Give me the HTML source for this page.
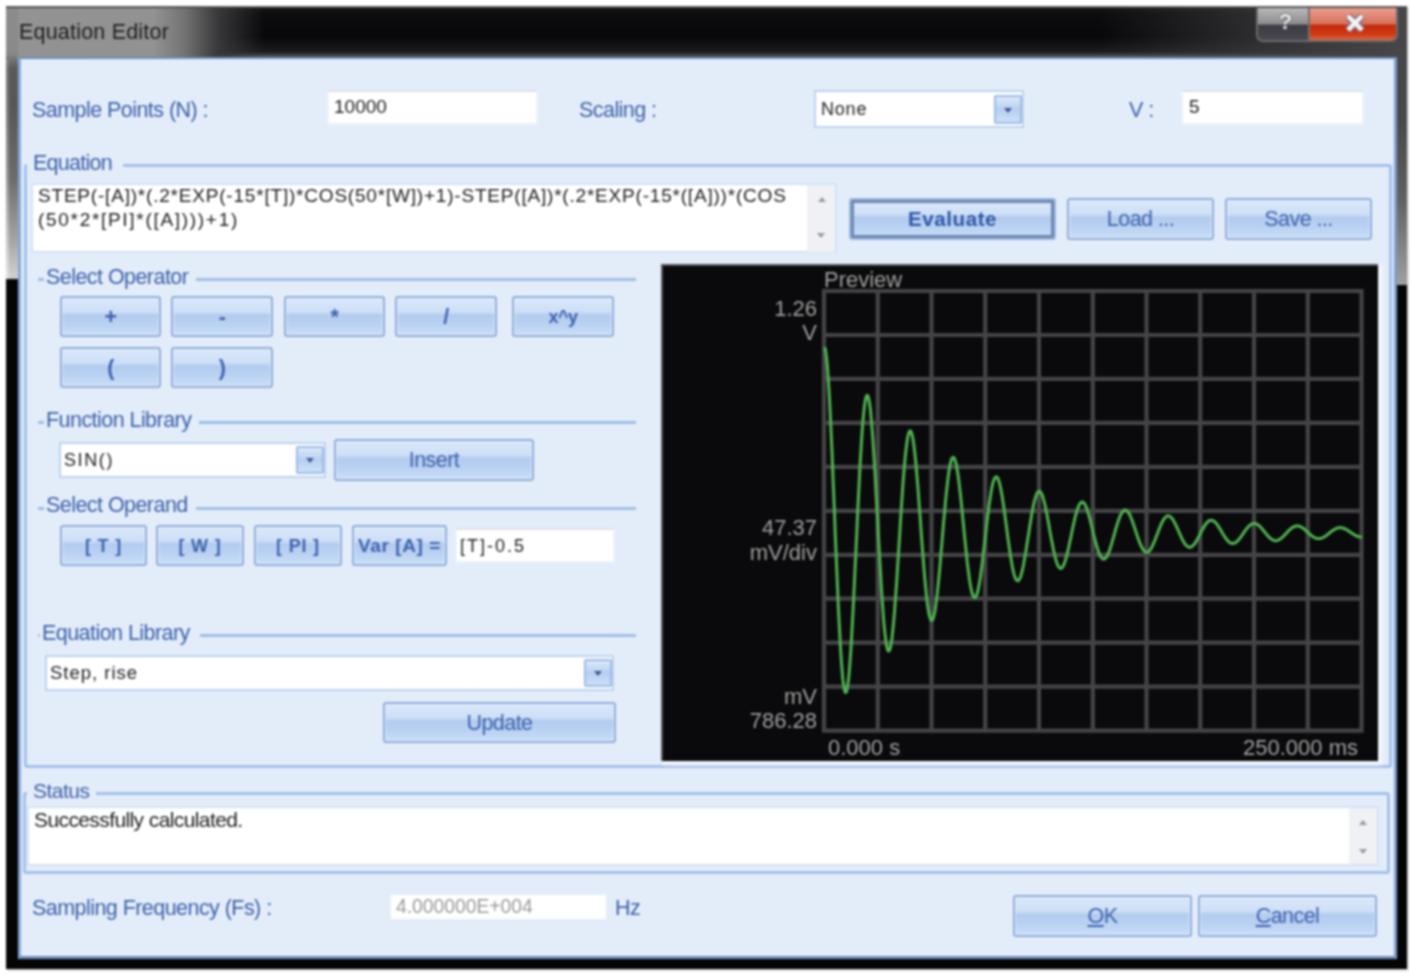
<!DOCTYPE html>
<html><head><meta charset="utf-8"><title>Equation Editor</title>
<style>
html,body{margin:0;padding:0}
body{width:1411px;height:976px;background:#fff;position:relative;overflow:hidden;font-family:"Liberation Sans",sans-serif;font-size:20px;color:#3c5fa8}
.a{position:absolute}
.t{position:absolute;white-space:pre;line-height:24px;height:24px}
.btn{position:absolute;box-sizing:border-box;border:2px solid #90acd9;border-radius:3px;background:linear-gradient(#dbe8fa 0%,#cddff7 38%,#b3cbee 46%,#b9d1f2 70%,#c9def7 100%);color:#3d62ae;text-align:center;font-size:21.5px;letter-spacing:-.55px;box-shadow:inset 0 0 0 1px rgba(235,243,253,.7)}
.btn span{position:absolute;left:0;right:0;top:50%;margin-top:-12px;line-height:24px;white-space:pre}
.inp{position:absolute;box-sizing:border-box;background:#fff;border:2px solid #edf2fa;border-top-color:#dde1e8;color:#1c1c1c}
.dd{position:absolute;box-sizing:border-box;border:2px solid #9fbbe4;border-radius:2px;background:linear-gradient(#dce9fa,#b7cff0 50%,#cce0f8)}
.dd:after{content:"";position:absolute;left:50%;top:50%;margin-left:-4px;margin-top:-2px;border:4px solid transparent;border-top:5px solid #3a5a98;border-bottom:0}
.gl{position:absolute;height:3px;background:#a0bde7;margin-top:-1px}
.lab{position:absolute;white-space:pre;line-height:24px;height:24px;background:#e3edfa;padding:0 6px}
</style></head>
<body>
<div id="root" style="position:absolute;left:0;top:0;width:1411px;height:976px;background:#fff;filter:blur(1px)">
<!-- window frame -->
<div class="a" style="left:6px;top:6px;width:1401px;height:963px;background:#050506;box-shadow:1px 1px 2px rgba(0,0,0,.3)"></div>
<div class="a" id="titlebar" style="left:6px;top:6px;width:1401px;height:52px;background:linear-gradient(#1a1a1c 0,#0c0c0e 8px,#08080a 60%,#1c1c1e 46px,#4c4c4e 50px,#555 52px)"></div>
<div class="a" id="glow" style="left:6px;top:7px;width:420px;height:51px;background:linear-gradient(90deg,#939393 0,#929292 148px,#747474 178px,#38383a 212px,rgba(12,12,14,0) 258px)"></div>
<div class="a" style="left:6px;top:6px;width:1401px;height:2px;background:linear-gradient(#8a8a8a,#2a2a2a)"></div>
<div class="a" id="lframe" style="left:6px;top:8px;width:12px;height:271px;background:linear-gradient(#8c8c8c 0,#8a8a8a 45px,#5a5a5a 60px,#585858 100px,#6c6c6c 170px,#a8a8a8 235px,#d0d0d0 268px,#c8c8c8 271px)"></div>
<div class="a" style="left:6px;top:60px;width:3px;height:219px;background:linear-gradient(rgba(255,255,255,.15),rgba(255,255,255,.4))"></div>
<div class="a" id="rframe" style="left:1396px;top:8px;width:11px;height:277px;background:linear-gradient(#464648 0,#484848 110px,#606060 190px,#8c8c8c 250px,#a0a0a0 277px)"></div>
<div class="a" id="rglow" style="left:1100px;top:8px;width:296px;height:50px;background:linear-gradient(90deg,rgba(70,70,72,0),rgba(70,70,72,.55) 50%,#464648)"></div>
<div class="t" id="title" style="left:19px;top:20px;font-size:21.5px;color:#1c1c1c;letter-spacing:.2px">Equation Editor</div>
<!-- caption buttons -->
<div class="a" id="capbtn" style="left:1256px;top:8px;width:142px;height:34px;border-radius:0 0 7px 7px;border:2px solid #6c6c6e;border-top:0;box-sizing:border-box;overflow:hidden;background:#444">
  <div class="a" style="left:0;top:0;width:51px;height:35px;background:linear-gradient(#b9b9bb 0,#8d8d90 45%,#3c3d42 50%,#4a4b50 100%)"></div>
  <div class="a" style="left:51px;top:0;width:91px;height:35px;background:linear-gradient(#e9a090 0,#d8705c 45%,#c32a0c 50%,#cf3a14 75%,#e08060 100%)"></div>
  <div class="a" style="left:50px;top:0;width:2px;height:35px;background:#7a6c6c"></div>
  <div class="t" style="left:2px;width:51px;top:2px;text-align:center;font-weight:bold;font-size:22px;color:#e9e9ee;text-shadow:0 0 2px #333">?</div>
  <svg class="a" style="left:85px;top:4.5px" width="24" height="20" viewBox="0 0 24 20"><path d="M5 3 L19 17 M19 3 L5 17" stroke="#80717a" stroke-width="7.5" /><path d="M5 3 L19 17 M19 3 L5 17" stroke="#f4f4f8" stroke-width="4.5"/></svg>
</div>
<!-- client -->
<div class="a" id="client" style="left:18px;top:57px;width:1379px;height:902px;box-sizing:border-box;border:2px solid #6b8dba;border-left:3px solid #86a7d9;border-right:3px solid #7d9dcc;border-bottom:3px solid #6f8fbc;background:#e3edfa"></div>

<!-- row 1 -->
<div class="t" style="left:32px;top:98px;font-size:21.5px;letter-spacing:-.55px">Sample Points (N) :</div>
<div class="inp" style="left:327px;top:90px;width:211px;height:35px"><div class="t" style="left:5px;top:3px;font-size:19px">10000</div></div>
<div class="t" style="left:579px;top:98px;font-size:21.5px;letter-spacing:-.55px">Scaling :</div>
<div class="inp" style="left:814px;top:90px;width:210px;height:38px;border-color:#bcd2ef"><div class="t" style="left:5px;top:5px;font-size:18px;letter-spacing:.8px">None</div></div>
<div class="dd" style="left:994px;top:95px;width:28px;height:29px"></div>
<div class="t" style="left:1129px;top:98px;font-size:21.5px;letter-spacing:-.55px">V :</div>
<div class="inp" style="left:1181px;top:90px;width:183px;height:35px"><div class="t" style="left:6px;top:3px;font-size:19px">5</div></div>

<!-- Equation group -->
<div class="a" style="left:24px;top:164px;width:1368px;height:604px;box-sizing:border-box;border:3px solid #a3c0e9;border-radius:3px"></div>
<div class="lab" style="left:27px;top:151px;padding:0 11px 0 6px;font-size:21.5px;letter-spacing:-.75px">Equation</div>
<div class="inp" style="left:31px;top:183px;width:806px;height:70px;border-color:#d3e2f6">
  <div class="t" style="left:5px;top:-1px;font-size:19px;line-height:24px;height:48px;letter-spacing:.8px">STEP(-[A])*(.2*EXP(-15*[T])*COS(50*[W])+1)-STEP([A])*(.2*EXP(-15*([A]))*(COS
<span style="letter-spacing:1.7px">(50*2*[PI]*([A])))+1)</span></div>
  <div class="a" style="right:0;top:0;width:28px;height:67px;background:#f0f1f4"></div>
  <div class="a" style="right:9px;top:12px;border:4px solid transparent;border-bottom:5px solid #999;border-top:0"></div>
  <div class="a" style="right:10px;top:48px;border:4px solid transparent;border-top:5px solid #999;border-bottom:0"></div>
</div>
<div class="btn" style="left:849px;top:198px;width:207px;height:42px;border-color:#9bb6de;box-shadow:inset 0 0 0 3px #6f88b2;font-weight:bold;color:#2d56a6;font-size:20.5px;letter-spacing:.6px"><span>Evaluate</span></div>
<div class="btn" style="left:1067px;top:198px;width:147px;height:42px"><span>Load ...</span></div>
<div class="btn" style="left:1225px;top:198px;width:147px;height:42px"><span>Save ...</span></div>

<!-- Select Operator -->
<div class="gl" style="left:38px;top:279px;width:598px"></div>
<div class="lab" style="left:44px;top:265px;padding:0 8px 0 2px;font-size:21.5px;letter-spacing:-.55px">Select Operator</div>
<div class="btn" style="left:60px;top:296px;width:101px;height:41px"><span style="font-weight:bold">+</span></div>
<div class="btn" style="left:171px;top:296px;width:102px;height:41px"><span style="font-weight:bold">-</span></div>
<div class="btn" style="left:284px;top:296px;width:101px;height:41px"><span style="font-weight:bold">*</span></div>
<div class="btn" style="left:395px;top:296px;width:102px;height:41px"><span style="font-weight:bold">/</span></div>
<div class="btn" style="left:512px;top:296px;width:102px;height:41px;font-size:18px"><span style="font-weight:bold">x^y</span></div>
<div class="btn" style="left:60px;top:347px;width:101px;height:41px"><span style="font-weight:bold">(</span></div>
<div class="btn" style="left:171px;top:347px;width:102px;height:41px"><span style="font-weight:bold">)</span></div>

<!-- Function Library -->
<div class="gl" style="left:38px;top:422px;width:598px"></div>
<div class="lab" style="left:44px;top:408px;padding:0 8px 0 2px;font-size:21.5px;letter-spacing:-.55px">Function Library</div>
<div class="inp" style="left:59px;top:442px;width:267px;height:36px;border-color:#bcd2ef"><div class="t" style="left:3px;top:4px;font-size:18px;letter-spacing:1.6px">SIN()</div></div>
<div class="dd" style="left:296px;top:446px;width:28px;height:28px"></div>
<div class="btn" style="left:334px;top:439px;width:200px;height:42px"><span>Insert</span></div>

<!-- Select Operand -->
<div class="gl" style="left:38px;top:508px;width:598px"></div>
<div class="lab" style="left:44px;top:493px;padding:0 8px 0 2px;font-size:21.5px;letter-spacing:-.55px">Select Operand</div>
<div class="btn" style="left:60px;top:525px;width:87px;height:41px;font-size:18px"><span style="font-weight:bold;letter-spacing:.8px">[ T ]</span></div>
<div class="btn" style="left:156px;top:525px;width:88px;height:41px;font-size:18px"><span style="font-weight:bold;letter-spacing:.8px">[ W ]</span></div>
<div class="btn" style="left:254px;top:525px;width:88px;height:41px;font-size:18px"><span style="font-weight:bold;letter-spacing:.8px">[ PI ]</span></div>
<div class="btn" style="left:352px;top:525px;width:95px;height:41px;font-size:18px"><span style="font-weight:bold;letter-spacing:.6px;font-size:19px">Var [A] =</span></div>
<div class="inp" style="left:455px;top:528px;width:160px;height:35px"><div class="t" style="left:3px;top:4px;font-size:18px;letter-spacing:2px">[T]-0.5</div></div>

<!-- Equation Library -->
<div class="gl" style="left:38px;top:635px;width:598px"></div>
<div class="lab" style="left:40px;top:621px;padding:0 10px 0 2px;font-size:21.5px;letter-spacing:-.55px">Equation Library</div>
<div class="inp" style="left:45px;top:655px;width:569px;height:36px;border-color:#bcd2ef"><div class="t" style="left:3px;top:4px;font-size:18.5px;letter-spacing:1px">Step, rise</div></div>
<div class="dd" style="left:584px;top:659px;width:28px;height:28px"></div>
<div class="btn" style="left:383px;top:702px;width:233px;height:41px"><span>Update</span></div>

<!-- Preview -->
<div class="a" id="preview" style="left:661px;top:264px;width:717px;height:497px;background:#0a0a0c;border-top:2px solid #555;border-left:2px solid #555;box-sizing:border-box;box-shadow:3px 3px 3px 1px #f3f7fd">
<svg class="a" style="left:-2px;top:-2px" width="717" height="496" viewBox="661 264 717 496" font-family="Liberation Sans, sans-serif" font-size="22" fill="#a0a0a0">
<path id="grid" stroke="#444447" stroke-width="4.2" fill="none" d="M824.0 289.0V732.6M822.0 291.0H1363.5M877.8 289.0V732.6M822.0 335.0H1363.5M931.5 289.0V732.6M822.0 378.9H1363.5M985.2 289.0V732.6M822.0 422.9H1363.5M1039.0 289.0V732.6M822.0 466.8H1363.5M1092.8 289.0V732.6M822.0 510.8H1363.5M1146.5 289.0V732.6M822.0 554.8H1363.5M1200.2 289.0V732.6M822.0 598.7H1363.5M1254.0 289.0V732.6M822.0 642.7H1363.5M1307.8 289.0V732.6M822.0 686.6H1363.5M1361.5 289.0V732.6M822.0 730.6H1363.5"/>
<path id="wave" fill="none" stroke="#50b450" stroke-width="3" stroke-linejoin="round" d="M824.5 347.2L825.3 349.3L826.0 353.7L826.8 360.4L827.6 369.1L828.3 379.8L829.1 392.2L829.9 406.3L830.6 421.9L831.4 438.7L832.2 456.4L832.9 474.9L833.7 494.0L834.5 513.4L835.2 532.7L836.0 551.9L836.8 570.6L837.6 588.7L838.3 605.8L839.1 621.9L839.9 636.7L840.6 650.0L841.4 661.7L842.2 671.6L842.9 679.7L843.7 685.9L844.5 690.1L845.2 692.3L846.0 692.4L846.8 690.6L847.5 686.8L848.3 681.1L849.1 673.6L849.8 664.4L850.6 653.6L851.4 641.5L852.1 628.1L852.9 613.7L853.7 598.4L854.4 582.5L855.2 566.1L856.0 549.4L856.8 532.7L857.5 516.2L858.3 500.1L859.1 484.6L859.8 469.8L860.6 456.0L861.4 443.3L862.1 431.8L862.9 421.7L863.7 413.2L864.4 406.2L865.2 400.9L866.0 397.3L866.7 395.4L867.5 395.3L868.3 396.9L869.0 400.1L869.8 405.0L870.6 411.5L871.3 419.4L872.1 428.7L872.9 439.1L873.6 450.6L874.4 463.0L875.2 476.2L875.9 489.9L876.7 504.0L877.5 518.4L878.2 532.7L879.0 546.9L879.8 560.8L880.6 574.2L881.3 586.9L882.1 598.8L882.9 609.7L883.6 619.6L884.4 628.3L885.2 635.6L885.9 641.6L886.7 646.2L887.5 649.3L888.2 650.9L889.0 651.0L889.8 649.7L890.5 646.9L891.3 642.6L892.1 637.1L892.8 630.3L893.6 622.3L894.4 613.3L895.1 603.4L895.9 592.7L896.7 581.4L897.4 569.6L898.2 557.4L899.0 545.1L899.8 532.7L900.5 520.5L901.3 508.6L902.1 497.1L902.8 486.1L903.6 475.9L904.4 466.5L905.1 458.0L905.9 450.5L906.7 444.2L907.4 439.0L908.2 435.0L909.0 432.4L909.7 431.0L910.5 430.9L911.3 432.1L912.0 434.5L912.8 438.1L913.6 442.9L914.3 448.8L915.1 455.6L915.9 463.4L916.6 471.9L917.4 481.1L918.2 490.8L918.9 501.0L919.7 511.5L920.5 522.1L921.2 532.7L922.0 543.3L922.8 553.5L923.6 563.4L924.3 572.9L925.1 581.7L925.9 589.8L926.6 597.1L927.4 603.5L928.2 609.0L928.9 613.4L929.7 616.8L930.5 619.1L931.2 620.3L932.0 620.4L932.8 619.4L933.5 617.3L934.3 614.1L935.1 610.0L935.8 605.0L936.6 599.1L937.4 592.4L938.1 585.1L938.9 577.2L939.7 568.8L940.4 560.0L941.2 551.0L942.0 541.9L942.8 532.7L943.5 523.7L944.3 514.8L945.1 506.3L945.8 498.2L946.6 490.6L947.4 483.6L948.1 477.3L948.9 471.8L949.7 467.1L950.4 463.3L951.2 460.4L952.0 458.4L952.7 457.4L953.5 457.3L954.3 458.2L955.0 460.0L955.8 462.7L956.6 466.2L957.3 470.5L958.1 475.6L958.9 481.3L959.6 487.7L960.4 494.5L961.2 501.7L961.9 509.2L962.7 517.0L963.5 524.8L964.2 532.7L965.0 540.5L965.8 548.1L966.6 555.5L967.3 562.5L968.1 569.0L968.9 575.0L969.6 580.4L970.4 585.2L971.2 589.2L971.9 592.5L972.7 595.0L973.5 596.7L974.2 597.6L975.0 597.7L975.8 596.9L976.5 595.4L977.3 593.0L978.1 590.0L978.8 586.3L979.6 581.9L980.4 577.0L981.1 571.5L981.9 565.6L982.7 559.4L983.4 552.9L984.2 546.3L985.0 539.5L985.8 532.7L986.5 526.0L987.3 519.5L988.1 513.1L988.8 507.1L989.6 501.5L990.4 496.4L991.1 491.7L991.9 487.6L992.7 484.1L993.4 481.3L994.2 479.1L995.0 477.7L995.7 476.9L996.5 476.8L997.3 477.5L998.0 478.8L998.8 480.8L999.6 483.4L1000.3 486.7L1001.1 490.4L1001.9 494.7L1002.6 499.3L1003.4 504.4L1004.2 509.7L1004.9 515.3L1005.7 521.1L1006.5 526.9L1007.2 532.7L1008.0 538.5L1008.8 544.1L1009.6 549.6L1010.3 554.7L1011.1 559.6L1011.9 564.0L1012.6 568.0L1013.4 571.6L1014.2 574.6L1014.9 577.0L1015.7 578.9L1016.5 580.1L1017.2 580.8L1018.0 580.8L1018.8 580.3L1019.5 579.1L1020.3 577.4L1021.1 575.2L1021.8 572.4L1022.6 569.1L1023.4 565.5L1024.1 561.5L1024.9 557.1L1025.7 552.5L1026.4 547.7L1027.2 542.8L1028.0 537.8L1028.8 532.7L1029.5 527.8L1030.3 522.9L1031.1 518.2L1031.8 513.8L1032.6 509.6L1033.4 505.8L1034.1 502.3L1034.9 499.3L1035.7 496.7L1036.4 494.6L1037.2 493.0L1038.0 491.9L1038.7 491.4L1039.5 491.3L1040.3 491.8L1041.0 492.8L1041.8 494.3L1042.6 496.2L1043.3 498.6L1044.1 501.4L1044.9 504.5L1045.6 508.0L1046.4 511.7L1047.2 515.7L1047.9 519.8L1048.7 524.1L1049.5 528.4L1050.2 532.7L1051.0 537.0L1051.8 541.2L1052.6 545.2L1053.3 549.0L1054.1 552.6L1054.9 555.9L1055.6 558.9L1056.4 561.5L1057.2 563.7L1057.9 565.5L1058.7 566.9L1059.5 567.8L1060.2 568.3L1061.0 568.4L1061.8 568.0L1062.5 567.1L1063.3 565.8L1064.1 564.2L1064.8 562.1L1065.6 559.7L1066.4 557.0L1067.1 554.0L1067.9 550.8L1068.7 547.4L1069.4 543.8L1070.2 540.2L1071.0 536.5L1071.8 532.7L1072.5 529.0L1073.3 525.5L1074.1 522.0L1074.8 518.7L1075.6 515.6L1076.4 512.8L1077.1 510.2L1077.9 508.0L1078.7 506.1L1079.4 504.5L1080.2 503.3L1081.0 502.5L1081.7 502.1L1082.5 502.1L1083.3 502.4L1084.0 503.1L1084.8 504.2L1085.6 505.7L1086.3 507.4L1087.1 509.5L1087.9 511.8L1088.6 514.4L1089.4 517.2L1090.2 520.1L1090.9 523.2L1091.7 526.3L1092.5 529.5L1093.2 532.7L1094.0 535.9L1094.8 539.0L1095.6 542.0L1096.3 544.8L1097.1 547.5L1097.9 549.9L1098.6 552.1L1099.4 554.0L1100.2 555.7L1100.9 557.0L1101.7 558.1L1102.5 558.7L1103.2 559.1L1104.0 559.1L1104.8 558.8L1105.5 558.2L1106.3 557.3L1107.1 556.0L1107.8 554.5L1108.6 552.7L1109.4 550.7L1110.1 548.5L1110.9 546.1L1111.7 543.6L1112.4 540.9L1113.2 538.2L1114.0 535.5L1114.8 532.7L1115.5 530.0L1116.3 527.3L1117.1 524.8L1117.8 522.3L1118.6 520.0L1119.4 517.9L1120.1 516.0L1120.9 514.4L1121.7 513.0L1122.4 511.8L1123.2 510.9L1124.0 510.3L1124.7 510.0L1125.5 510.0L1126.3 510.3L1127.0 510.8L1127.8 511.6L1128.6 512.7L1129.3 514.0L1130.1 515.5L1130.9 517.3L1131.6 519.2L1132.4 521.2L1133.2 523.4L1133.9 525.7L1134.7 528.0L1135.5 530.4L1136.2 532.7L1137.0 535.1L1137.8 537.4L1138.6 539.6L1139.3 541.7L1140.1 543.6L1140.9 545.5L1141.6 547.1L1142.4 548.5L1143.2 549.7L1143.9 550.7L1144.7 551.5L1145.5 552.0L1146.2 552.3L1147.0 552.3L1147.8 552.1L1148.5 551.6L1149.3 550.9L1150.1 550.0L1150.8 548.9L1151.6 547.5L1152.4 546.0L1153.1 544.4L1153.9 542.6L1154.7 540.8L1155.4 538.8L1156.2 536.8L1157.0 534.8L1157.8 532.7L1158.5 530.7L1159.3 528.7L1160.1 526.8L1160.8 525.0L1161.6 523.3L1162.4 521.8L1163.1 520.4L1163.9 519.1L1164.7 518.1L1165.4 517.2L1166.2 516.6L1167.0 516.1L1167.7 515.9L1168.5 515.9L1169.3 516.1L1170.0 516.5L1170.8 517.1L1171.6 517.9L1172.3 518.9L1173.1 520.0L1173.9 521.3L1174.6 522.7L1175.4 524.2L1176.2 525.8L1176.9 527.5L1177.7 529.2L1178.5 531.0L1179.2 532.7L1180.0 534.5L1180.8 536.2L1181.6 537.8L1182.3 539.4L1183.1 540.8L1183.9 542.2L1184.6 543.4L1185.4 544.4L1186.2 545.3L1186.9 546.1L1187.7 546.6L1188.5 547.0L1189.2 547.2L1190.0 547.2L1190.8 547.0L1191.5 546.7L1192.3 546.2L1193.1 545.5L1193.8 544.7L1194.6 543.7L1195.4 542.6L1196.1 541.4L1196.9 540.1L1197.7 538.7L1198.4 537.2L1199.2 535.8L1200.0 534.2L1200.8 532.7L1201.5 531.2L1202.3 529.8L1203.1 528.4L1203.8 527.0L1204.6 525.8L1205.4 524.6L1206.1 523.6L1206.9 522.7L1207.7 521.9L1208.4 521.2L1209.2 520.8L1210.0 520.4L1210.7 520.3L1211.5 520.3L1212.3 520.4L1213.0 520.7L1213.8 521.1L1214.6 521.7L1215.3 522.4L1216.1 523.3L1216.9 524.2L1217.6 525.3L1218.4 526.4L1219.2 527.6L1219.9 528.8L1220.7 530.1L1221.5 531.4L1222.2 532.7L1223.0 534.0L1223.8 535.3L1224.6 536.5L1225.3 537.6L1226.1 538.7L1226.9 539.7L1227.6 540.6L1228.4 541.4L1229.2 542.1L1229.9 542.6L1230.7 543.0L1231.5 543.3L1232.2 543.5L1233.0 543.5L1233.8 543.3L1234.5 543.1L1235.3 542.7L1236.1 542.2L1236.8 541.6L1237.6 540.9L1238.4 540.0L1239.1 539.1L1239.9 538.2L1240.7 537.1L1241.4 536.1L1242.2 535.0L1243.0 533.8L1243.8 532.7L1244.5 531.6L1245.3 530.5L1246.1 529.5L1246.8 528.5L1247.6 527.6L1248.4 526.7L1249.1 525.9L1249.9 525.3L1250.7 524.7L1251.4 524.2L1252.2 523.9L1253.0 523.6L1253.7 523.5L1254.5 523.5L1255.3 523.6L1256.0 523.8L1256.8 524.1L1257.6 524.6L1258.3 525.1L1259.1 525.7L1259.9 526.4L1260.6 527.2L1261.4 528.0L1262.2 528.9L1262.9 529.9L1263.7 530.8L1264.5 531.8L1265.2 532.7L1266.0 533.7L1266.8 534.6L1267.6 535.5L1268.3 536.4L1269.1 537.2L1269.9 537.9L1270.6 538.6L1271.4 539.1L1272.2 539.6L1272.9 540.0L1273.7 540.4L1274.5 540.6L1275.2 540.7L1276.0 540.7L1276.8 540.6L1277.5 540.4L1278.3 540.1L1279.1 539.7L1279.8 539.3L1280.6 538.7L1281.4 538.1L1282.1 537.5L1282.9 536.8L1283.7 536.0L1284.4 535.2L1285.2 534.4L1286.0 533.6L1286.8 532.7L1287.5 531.9L1288.3 531.1L1289.1 530.3L1289.8 529.6L1290.6 528.9L1291.4 528.3L1292.1 527.7L1292.9 527.2L1293.7 526.8L1294.4 526.4L1295.2 526.2L1296.0 526.0L1296.7 525.9L1297.5 525.9L1298.3 526.0L1299.0 526.1L1299.8 526.4L1300.6 526.7L1301.3 527.1L1302.1 527.5L1302.9 528.1L1303.6 528.6L1304.4 529.3L1305.2 529.9L1305.9 530.6L1306.7 531.3L1307.5 532.0L1308.2 532.7L1309.0 533.4L1309.8 534.1L1310.6 534.8L1311.3 535.4L1312.1 536.0L1312.9 536.6L1313.6 537.1L1314.4 537.5L1315.2 537.9L1315.9 538.2L1316.7 538.4L1317.5 538.5L1318.2 538.6L1319.0 538.6L1319.8 538.6L1320.5 538.4L1321.3 538.2L1322.1 537.9L1322.8 537.6L1323.6 537.2L1324.4 536.7L1325.1 536.2L1325.9 535.7L1326.7 535.2L1327.4 534.6L1328.2 534.0L1329.0 533.3L1329.8 532.7L1330.5 532.1L1331.3 531.5L1332.1 531.0L1332.8 530.4L1333.6 529.9L1334.4 529.4L1335.1 529.0L1335.9 528.6L1336.7 528.3L1337.4 528.1L1338.2 527.9L1339.0 527.7L1339.7 527.7L1340.5 527.7L1341.3 527.7L1342.0 527.8L1342.8 528.0L1343.6 528.3L1344.3 528.5L1345.1 528.9L1345.9 529.3L1346.6 529.7L1347.4 530.2L1348.2 530.6L1348.9 531.1L1349.7 531.7L1350.5 532.2L1351.2 532.7L1352.0 533.3L1352.8 533.8L1353.6 534.3L1354.3 534.7L1355.1 535.2L1355.9 535.6L1356.6 535.9L1357.4 536.3L1358.2 536.5L1358.9 536.7L1359.7 536.9L1360.5 537.0L1361.2 537.1L1362.0 537.1"/>
<text x="824" y="286.5" font-size="22">Preview</text>
<text x="817" y="316" text-anchor="end">1.26</text>
<text x="817" y="340" text-anchor="end">V</text>
<text x="817" y="535" text-anchor="end">47.37</text>
<text x="817" y="560" text-anchor="end">mV/div</text>
<text x="817" y="704" text-anchor="end">mV</text>
<text x="817" y="728" text-anchor="end">786.28</text>
<text x="828" y="755">0.000 s</text>
<text x="1358" y="755" text-anchor="end">250.000 ms</text>
</svg>
</div>

<!-- Status -->
<div class="a" style="left:23px;top:792px;width:1367px;height:82px;box-sizing:border-box;border:3px solid #a3c0e9;border-radius:3px"></div>
<div class="lab" style="left:27px;top:779px;font-size:21px;letter-spacing:-.5px">Status</div>
<div class="inp" style="left:27px;top:806px;width:1352px;height:60px;border-color:#d3e2f6">
  <div class="t" style="left:5px;top:0px;font-size:21px;letter-spacing:-.6px">Successfully calculated.</div>
  <div class="a" style="right:0;top:0;width:28px;height:56px;background:#f0f1f4"></div>
  <div class="a" style="right:10px;top:12px;border:4px solid transparent;border-bottom:5px solid #999;border-top:0"></div>
  <div class="a" style="right:10px;top:41px;border:4px solid transparent;border-top:5px solid #999;border-bottom:0"></div>
</div>

<!-- bottom -->
<div class="t" style="left:32px;top:896px;font-size:21.5px;letter-spacing:-.55px">Sampling Frequency (Fs) :</div>
<div class="a" style="left:391px;top:895px;width:215px;height:24px;background:#fff"><div class="t" style="left:5px;top:0;font-size:19.3px;color:#9a9a9a">4.000000E+004</div></div>
<div class="t" style="left:615px;top:896px;font-size:21.5px;letter-spacing:-.55px">Hz</div>
<div class="btn" style="left:1013px;top:895px;width:179px;height:42px"><span><u>O</u>K</span></div>
<div class="btn" style="left:1198px;top:895px;width:179px;height:42px"><span><u>C</u>ancel</span></div>

</div>
</body></html>
